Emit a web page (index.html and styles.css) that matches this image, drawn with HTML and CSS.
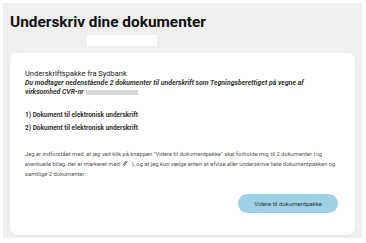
FILE: index.html
```html
<!DOCTYPE html>
<html>
<head>
<meta charset="utf-8">
<link rel="stylesheet" href="styles.css">
</head>
<body>
<div class="page">
  <h1 class="title">Underskriv dine dokumenter</h1>
  <div class="redact-row"><span class="redact"></span></div>
  <div class="card">
    <div class="pkg">Underskriftspakke fra Sydbank</div>
    <div class="intro">Du modtager nedenstående 2 dokumenter til underskrift som Tegningsberettiget på vegne af virksomhed CVR-nr <span class="blur"></span></div>
    <ol class="docs">
      <li>1) Dokument til elektronisk underskrift</li>
      <li>2) Dokument til elektronisk underskrift</li>
    </ol>
    <p class="terms">Jeg er indforstået med, at jeg ved klik på knappen "Videre til dokumentpakke" skal forholde mig til 2 dokumenter (og eventuelle bilag, der er markeret med<svg class="clip" viewBox="0 0 8 8" width="7" height="7"><path d="M2 7 L6 1.5 M1.5 5.5 L5 1" stroke="#444" stroke-width="1" fill="none"/></svg>), og at jeg kun vælge enten at afvise eller underskrive hele dokumentpakken og samtlige 2 dokumenter.</p>
    <div class="actions"><button class="btn">Videre til dokumentpakke</button></div>
  </div>
</div>
</body>
</html>
```
FILE: styles.css
```css
html, body { margin: 0; padding: 0; background: #fff; }
body { font-family: Roboto, "Noto Sans", sans-serif; color: #222; }
.page {
  margin: 3px 4px 5px 3px;
  height: 235px;
  background: #efefef;
  padding: 8px 7px 0 7px;
  box-sizing: border-box;
}
.title {
  margin: 0;
  font-size: 15.4px;
  font-weight: 700;
  line-height: 22px;
  color: #111;
}
.redact-row { height: 20px; padding-left: 77px; padding-top: 2px; box-sizing: border-box; }
.redact { display: block; width: 70px; height: 11px; background: #fff; }
.card {
  background: #fff;
  border-radius: 7px;
  height: 182px;
  padding: 16px 17px 0 15px;
  box-sizing: border-box;
  box-shadow: 0 1px 2px rgba(0,0,0,0.06);
  display: flex;
  flex-direction: column;
}
.pkg { font-size: 7.5px; line-height: 9px; color: #222; }
.intro { font-size: 6.9px; line-height: 9px; font-style: italic; font-weight: 700; color: #333; margin-top: 1px; padding-right: 13px; }
.blur { display: inline-block; width: 52px; height: 5px; background: #d6d6d6; vertical-align: middle; }
.docs { list-style: none; margin: 14px 0 0 0; padding: 0; }
.docs li { font-size: 6.5px; font-weight: 700; line-height: 9px; color: #333; margin-bottom: 4px; }
.terms { margin: 12px 0 0 0; padding-right: 1px; font-size: 5.8px; line-height: 10px; color: #555; }
.clip { vertical-align: -1px; margin: 0 3px 0 2px; }
.actions { display: flex; justify-content: flex-end; margin-top: 15px; }
.btn {
  background: #9ed0e6;
  border: none;
  border-radius: 10px;
  height: 19px;
  width: 100px;
  font-family: Roboto, sans-serif;
  font-size: 6px;
  color: #333;
  padding: 0;
}
```
